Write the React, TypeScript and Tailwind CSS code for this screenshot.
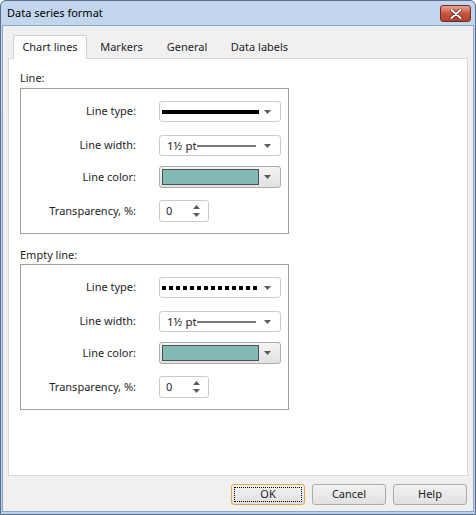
import React from 'react';

const font = { fontFamily: '"Noto Sans", "Open Sans", sans-serif' };

function Arrow() {
  return (
    <svg width="7" height="4" viewBox="0 0 7 4" className="shrink-0">
      <path d="M0 0 H7 L3.5 4 Z" fill="#5b5b5b" />
    </svg>
  );
}

function Combo({ children }: { children: React.ReactNode }) {
  return (
    <div className="flex h-[21px] w-[122px] items-center rounded-[3px] border border-[#cbcbcb] bg-white pl-[2px] pr-[9px]">
      <div className="flex flex-1 items-center">{children}</div>
      <Arrow />
    </div>
  );
}

function ColorCombo() {
  return (
    <div className="flex h-[22px] w-[122px] items-center rounded-[3px] border border-[#adadad] bg-gradient-to-b from-[#f4f4f4] to-[#e1e1e1] pl-[2px] pr-[9px]">
      <div className="mr-[5px] h-[16px] w-[100px] border border-[#4f4f4f] bg-[#83bbb4]" />
      <Arrow />
    </div>
  );
}

function Spinner() {
  return (
    <div className="flex h-[22px] w-[50px] items-center rounded-[3px] border border-[#cbcbcb] bg-white pl-[6px] pr-[8px]">
      <span className="flex-1 text-[11px] text-[#1e1e3c]">0</span>
      <div className="flex flex-col gap-[4px]">
        <svg width="7" height="4" viewBox="0 0 7 4">
          <path d="M0 4 H7 L3.5 0 Z" fill="#5b5b5b" />
        </svg>
        <svg width="7" height="4" viewBox="0 0 7 4">
          <path d="M0 0 H7 L3.5 4 Z" fill="#5b5b5b" />
        </svg>
      </div>
    </div>
  );
}

function Row({ label, children, className }: { label: string; children: React.ReactNode; className: string }) {
  return (
    <div className={`flex items-center ${className}`}>
      <div className="w-[115px] text-right text-[11px] text-[#1e1e1e]">{label}</div>
      <div className="ml-[23px]">{children}</div>
    </div>
  );
}

function LineGroup({ dotted }: { dotted: boolean }) {
  return (
    <div className="h-[146px] w-[269px] border border-[#a0a0a0] bg-white">
      <Row label="Line type:" className="mt-[12px]">
        <Combo>
          {dotted ? (
            <div className="flex gap-[3px]">
              {Array.from({ length: 14 }).map((_, i) => (
                <div key={i} className="h-[4px] w-[4px] bg-black" />
              ))}
            </div>
          ) : (
            <div className="h-[4px] w-[97px] bg-black" />
          )}
        </Combo>
      </Row>
      <Row label="Line width:" className="mt-[13px]">
        <Combo>
          <span className="ml-[5px] text-[11.5px] text-[#1e1e1e]">1½ pt</span>
          <div className="h-[2px] w-[59px] bg-[#777777]" />
        </Combo>
      </Row>
      <Row label="Line color:" className="mt-[10px]">
        <ColorCombo />
      </Row>
      <Row label="Transparency, %:" className="mt-[12px]">
        <Spinner />
      </Row>
    </div>
  );
}

function Tab({ label, active, w }: { label: string; active?: boolean; w: string }) {
  return (
    <div
      className={`flex items-center justify-center text-[11px] text-[#1e1e1e] ${w} ${
        active
          ? 'relative z-10 -mb-[1px] h-[24px] rounded-t-[2px] border border-b-0 border-[#cfcfcf] bg-gradient-to-b from-[#fcfcfc] to-white'
          : 'h-[22px]'
      }`}
    >
      {label}
    </div>
  );
}

function DialogButton({ label, focused }: { label: string; focused?: boolean }) {
  return (
    <div
      className={`flex h-[21px] w-[74px] items-center justify-center rounded-[3px] border bg-gradient-to-b from-[#f2f2f2] to-[#e0e0e0] text-[11px] text-[#1e1e1e] ${
        focused ? 'border-[#e0a74e]' : 'border-[#acacac]'
      }`}
    >
      {focused ? (
        <div className="flex h-[15px] w-[68px] items-center justify-center border border-dotted border-black">{label}</div>
      ) : (
        label
      )}
    </div>
  );
}

export default function App() {
  return (
    <div className="h-[515px] w-[476px] overflow-hidden" style={font}>
      <div className="flex h-full w-full flex-col rounded-t-[6px] border border-[#5a6f8a] bg-gradient-to-b from-[#c2d6ee] to-[#b8d0ea]">
        <div className="flex h-[24px] shrink-0 items-center justify-between pl-[6px] pr-[4px]">
          <span className="text-[11px] text-black">Data series format</span>
          <div className="mt-[1px] flex h-[17px] w-[31px] items-center justify-center rounded-[3px] border border-[#6b2e27] bg-gradient-to-b from-[#e7a596] via-[#c8543d] to-[#b5402c]">
            <svg width="12" height="10" viewBox="0 0 12 10">
              <path d="M1.5 1 L10.5 9 M10.5 1 L1.5 9" stroke="#4a1d17" strokeWidth="3.4" strokeLinecap="round" />
              <path d="M1.5 1 L10.5 9 M10.5 1 L1.5 9" stroke="white" strokeWidth="2" strokeLinecap="round" />
            </svg>
          </div>
        </div>
        <div className="mx-[1px] mb-[2px] flex flex-1 flex-col border border-[#8ba7c8] bg-[#f0f0f0]">
          <div className="mx-[5px] mt-[9px] flex items-end pl-[5px]">
            <Tab label="Chart lines" active w="w-[74px]" />
            <Tab label="Markers" w="w-[69px]" />
            <Tab label="General" w="w-[62px]" />
            <Tab label="Data labels" w="w-[83px]" />
          </div>
          <div className="mx-[5px] h-[418px] border border-[#d9d9d9] bg-white pl-[11px] pt-[11px]">
            <div className="h-[16px] text-[11px] text-[#1e1e1e]">Line:</div>
            <div className="mt-[2px]">
              <LineGroup dotted={false} />
            </div>
            <div className="mt-[13px] h-[16px] text-[11px] text-[#1e1e1e]">Empty line:</div>
            <div className="mt-[1px]">
              <LineGroup dotted />
            </div>
          </div>
          <div className="mt-[8px] flex justify-end gap-[7px] pr-[6px]">
            <DialogButton label="OK" focused />
            <DialogButton label="Cancel" />
            <DialogButton label="Help" />
          </div>
        </div>
      </div>
    </div>
  );
}
